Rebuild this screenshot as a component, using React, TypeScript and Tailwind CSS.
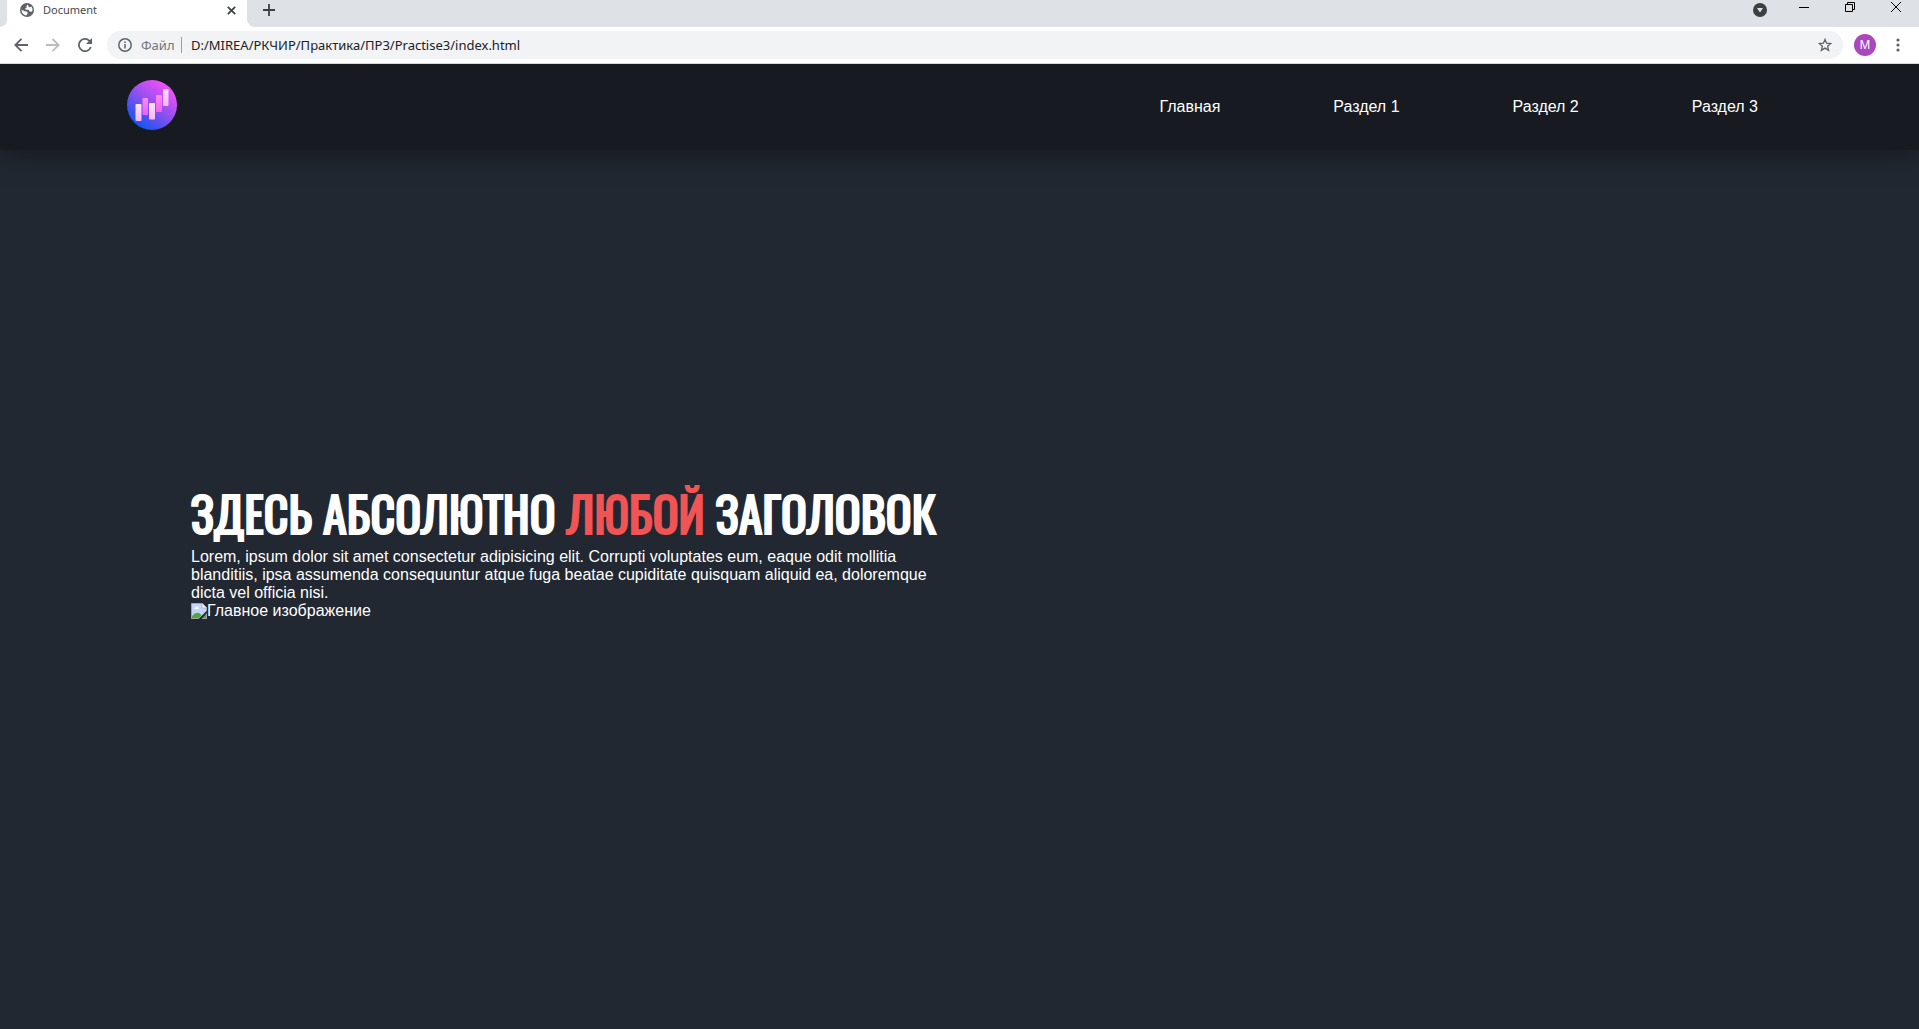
import React from "react";

const links = ["Главная", "Раздел 1", "Раздел 2", "Раздел 3"];

function TabStrip() {
  return (
    <div className="flex h-[27px] items-stretch bg-[#dee1e6]">
      <div className="w-[7px] bg-white">
        <div className="h-full rounded-br-lg bg-[#dee1e6]" />
      </div>
      <div className="flex h-full w-[240px] items-center bg-white pb-[7px] pl-[13px] pr-2">
        <svg width="14" height="14" viewBox="0 0 14 14" aria-hidden="true">
          <circle cx="7" cy="7" r="7" fill="#5f6368" />
          <path d="M1.6 6.6 4.4 8.2 6.8 8.4 7.8 10 6.4 12.6A5.8 5.8 0 0 1 1.6 6.6ZM8 1.5 6.4 3 6.7 4.6 5.2 5.6 5.4 6.6 8.4 6.7 9.6 8.4 11.6 8.8 12.6 7.2A5.8 5.8 0 0 0 11.4 3.4L9.8 4.2 8.4 3.4Z" fill="#fff" />
        </svg>
        <span className="ml-[9px] flex-1 text-[11px] leading-4 text-[#45494d]">Document</span>
        <button aria-label="Закрыть вкладку" className="flex size-4 items-center justify-center">
          <svg width="9" height="9" viewBox="0 0 9 9" stroke="#3c4043" strokeWidth="1.7">
            <path d="M.8.8 8.2 8.2M8.2.8.8 8.2" />
          </svg>
        </button>
      </div>
      <div className="flex flex-1 bg-white">
        <div className="flex flex-1 items-center rounded-bl-lg bg-[#dee1e6] pb-[7px] pl-[14px]">
          <button aria-label="Новая вкладка" className="flex size-4 items-center justify-center">
            <svg width="12" height="12" viewBox="0 0 12 12" stroke="#3c4043" strokeWidth="1.8">
              <path d="M6 0V12M0 6H12" />
            </svg>
          </button>
          <button aria-label="Поиск вкладок" className="ml-auto">
            <svg width="14" height="14" viewBox="0 0 14 14">
              <circle cx="7" cy="7" r="7" fill="#3c4043" />
              <path d="M4 5H10L7 9.4Z" fill="#dee1e6" />
            </svg>
          </button>
          <button aria-label="Свернуть" className="ml-8 pb-[6px]">
            <svg width="10" height="10" viewBox="0 0 10 10" stroke="#000">
              <path d="M0 5.5H10" />
            </svg>
          </button>
          <button aria-label="Свернуть в окно" className="ml-9 pb-[6px]">
            <svg width="10" height="10" viewBox="0 0 10 10" fill="none" stroke="#000">
              <path d="M.5 2.5H7.5V9.5H.5ZM2.5 2.5V.5H9.5V7.5H7.5" />
            </svg>
          </button>
          <button aria-label="Закрыть" className="ml-9 mr-[18px] pb-[6px]">
            <svg width="10" height="10" viewBox="0 0 10 10" stroke="#000">
              <path d="M0 0 10 10M10 0 0 10" />
            </svg>
          </button>
        </div>
      </div>
    </div>
  );
}

function Toolbar() {
  return (
    <div className="flex h-[37px] items-center border-b border-[#d5d7da] bg-white pl-[14px] pr-[15px]">
      <button aria-label="Назад">
        <svg width="14" height="14" viewBox="0 0 14 14" fill="none" stroke="#5f6368" strokeWidth="1.8">
          <path d="M14 7H1.5M7.5.8 1.3 7 7.5 13.2" />
        </svg>
      </button>
      <button aria-label="Вперёд" className="ml-[18px]">
        <svg width="14" height="14" viewBox="0 0 14 14" fill="none" stroke="#babcbe" strokeWidth="1.8">
          <path d="M0 7H12.5M6.5.8 12.7 7 6.5 13.2" />
        </svg>
      </button>
      <button aria-label="Обновить" className="ml-[18px]">
        <svg width="14" height="14" viewBox="0 0 14 14" fill="none">
          <path d="M12.8 9A6.1 6.1 0 1 1 11.4 2.8L13 4.4" stroke="#5f6368" strokeWidth="1.8" />
          <path d="M14 0V6H8Z" fill="#5f6368" />
        </svg>
      </button>
      <div className="ml-[15px] flex h-7 flex-1 items-center rounded-full bg-[#f1f3f4] pl-[11px] pr-[11px] text-[13px]">
        <svg width="14" height="14" viewBox="0 0 14 14" fill="none" stroke="#5f6368" strokeWidth="1.5" aria-hidden="true">
          <circle cx="7" cy="7" r="6.2" />
          <path d="M7 6V10.5M7 3.4V5" />
        </svg>
        <label htmlFor="address" className="ml-[9px] w-[33px] leading-5 text-[#72767a]">Файл</label>
        <span className="ml-[7px] h-4 w-px bg-[#9aa0a6]" />
        <input id="address" className="ml-[9px] h-5 min-w-0 flex-1 bg-transparent text-[#202124] outline-none" defaultValue="D:/MIREA/РКЧИР/Практика/ПР3/Practise3/index.html" />
        <button aria-label="Добавить в закладки">
          <svg width="14" height="14" viewBox="0 0 14 14" fill="none" stroke="#5f6368" strokeWidth="1.3">
            <path d="M7 1.4 8.6 5.2 12.8 5.5 9.6 8.2 10.6 12.3 7 10.1 3.4 12.3 4.4 8.2 1.2 5.5 5.4 5.2Z" />
          </svg>
        </button>
      </div>
      <button aria-label="Профиль" className="ml-[11px] flex size-[22px] items-center justify-center rounded-full bg-[#ab47bc] text-[12px] leading-4 text-white">M</button>
      <button aria-label="Меню" className="ml-4">
        <svg width="12" height="14" viewBox="0 0 12 14" fill="#5f6368">
          <circle cx="6" cy="2" r="1.6" />
          <circle cx="6" cy="7" r="1.6" />
          <circle cx="6" cy="12" r="1.6" />
        </svg>
      </button>
    </div>
  );
}

function Logo() {
  return (
    <svg width="50" height="50" viewBox="0 0 50 50" role="img" aria-label="Логотип">
      <defs>
        <linearGradient id="disc" x1="0.15" y1="0.85" x2="0.7" y2="0.1">
          <stop offset="0" stopColor="#1455f2" />
          <stop offset="0.5" stopColor="#8850ee" />
          <stop offset="1" stopColor="#e850f8" />
        </linearGradient>
        <linearGradient id="pale" x1="0" y1="0" x2="0" y2="1">
          <stop offset="0" stopColor="#f6e2ff" />
          <stop offset="1" stopColor="#fcb4fa" />
        </linearGradient>
        <linearGradient id="pink" x1="0" y1="0" x2="0" y2="1">
          <stop offset="0" stopColor="#f98cf2" />
          <stop offset="1" stopColor="#f65cf0" />
        </linearGradient>
      </defs>
      <circle cx="25" cy="25" r="25" fill="url(#disc)" />
      <rect x="8.500" y="24" width="6" height="17" rx="0.8" fill="url(#pale)" />
      <rect x="15.500" y="18" width="5.500" height="17" rx="0.8" fill="url(#pink)" />
      <rect x="22" y="23" width="6" height="16.500" rx="0.8" fill="url(#pale)" />
      <rect x="29" y="15" width="6" height="17" rx="0.8" fill="url(#pink)" />
      <rect x="36" y="9" width="5.500" height="17" rx="0.8" fill="url(#pale)" />
    </svg>
  );
}

function MissingImage() {
  return (
    <svg width="16" height="16" viewBox="0 0 16 16" role="img" aria-label="Изображение не загружено">
      <path d="M.5.5H11L15.500 5V15.500H.5Z" fill="#c3d5f7" stroke="#a5a5a5" />
      <path d="M11 0V5H16Z" fill="#f4f4f4" stroke="#a5a5a5" strokeWidth="0.6" />
      <path d="M3 6Q3 4.500 4.500 4.500Q5 3 6.500 3.500Q8 4 7.500 6Z" fill="#fff" />
      <path d="M1 15V13Q6 7 10.500 12L8 15Z" fill="#50a83c" />
      <path d="M10.500 15 15 10.500V15Z" fill="#50a83c" />
      <path d="M7.500 16 16 7.500V10L10.500 16Z" fill="#222831" />
    </svg>
  );
}

export default function App() {
  return (
    <div className="flex min-h-screen flex-col bg-[#222831]">
      <div className="z-10 font-['Noto_Sans','Open_Sans',sans-serif]">
        <TabStrip />
        <Toolbar />
      </div>
      <div className="flex flex-1 flex-col font-['Liberation_Sans',Arial,sans-serif] text-base leading-[18px] text-white">
        <header className="flex h-[86px] items-center justify-between bg-[#171a21] pl-[127px] pr-[161px] shadow-[0_0_30px_rgba(0,0,0,0.5)]">
          <a href="#" className="pb-[4px]"><Logo /></a>
          <nav className="flex gap-[113px]">
            {links.map((label) => (
              <a key={label} href="#">{label}</a>
            ))}
          </nav>
        </header>
        <main className="flex flex-1 flex-col justify-center pb-[86px] pl-[191px] pr-[10%]">
          <section className="w-1/2">
            <h1 className="whitespace-nowrap pt-1 font-['Oswald','Liberation_Sans_Narrow','Roboto_Condensed',sans-serif] text-5xl font-normal leading-[70px] [-webkit-text-stroke:2px_currentColor]">
              ЗДЕСЬ АБСОЛЮТНО <span className="text-[#f05454]">ЛЮБОЙ</span> ЗАГОЛОВОК
            </h1>
            <p>
              Lorem, ipsum dolor sit amet consectetur adipisicing elit. Corrupti voluptates eum, eaque odit mollitia blanditiis, ipsa assumenda consequuntur atque fuga beatae cupiditate quisquam aliquid ea, doloremque dicta vel officia nisi.
            </p>
            <div className="flex items-center">
              <MissingImage />
              <span>Главное изображение</span>
            </div>
          </section>
        </main>
      </div>
    </div>
  );
}
